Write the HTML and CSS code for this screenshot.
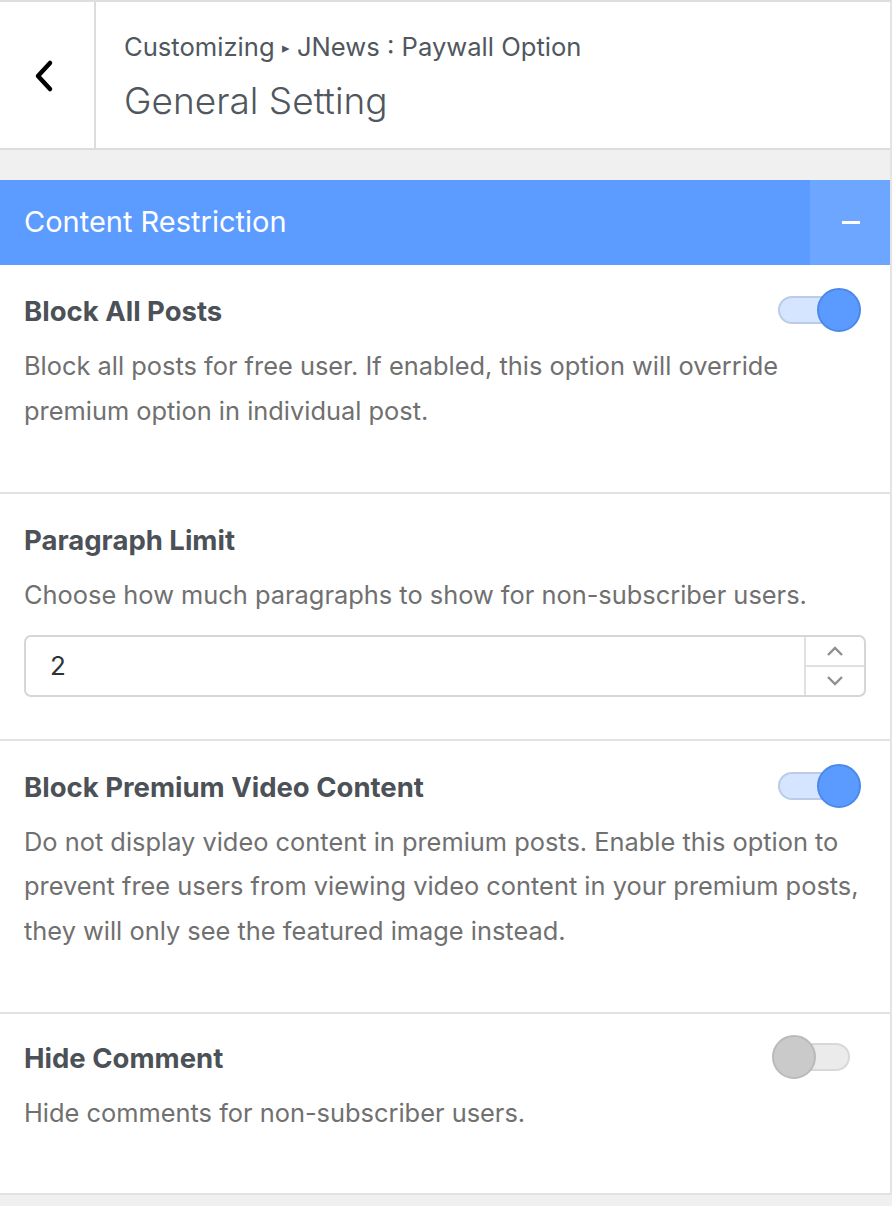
FILE: index.html
```html
<!DOCTYPE html>
<html lang="en">
<head>
<meta charset="utf-8">
<title>Customizing JNews Paywall Option</title>
<link rel="stylesheet" href="styles.css">
</head>
<body>
<div class="panel">
  <header class="head">
    <button class="back" aria-label="Back">
      <svg width="24" height="34" viewBox="0 0 24 34"><polyline points="17,4 5,17 17,30" fill="none" stroke="#000" stroke-width="4.5" stroke-linecap="round" stroke-linejoin="round"/></svg>
    </button>
    <div class="titles">
      <div class="crumb">Customizing <span class="arrow">▸</span> JNews : Paywall Option</div>
      <h1 class="title">General Setting</h1>
    </div>
  </header>
  <div class="gap"></div>
  <div class="section-bar">
    <div class="section-title">Content Restriction</div>
    <div class="collapse"><span class="minus"></span></div>
  </div>
  <div class="controls">
    <div class="control">
      <div class="control-head">
        <div class="label">Block All Posts</div>
        <div class="toggle on"><span class="track"></span><span class="knob"></span></div>
      </div>
      <p class="desc">Block all posts for free user. If enabled, this option will override premium option in individual post.</p>
    </div>
    <div class="control">
      <div class="control-head">
        <div class="label">Paragraph Limit</div>
      </div>
      <p class="desc">Choose how much paragraphs to show for non-subscriber users.</p>
      <div class="number">
        <input class="number-input" type="text" value="2">
        <div class="spin">
          <div class="spin-btn"><svg width="20" height="12" viewBox="0 0 20 12"><polyline points="3,10 10,3 17,10" fill="none" stroke="#8c8f94" stroke-width="2.4"/></svg></div>
          <div class="spin-btn down"><svg width="20" height="12" viewBox="0 0 20 12"><polyline points="3,2 10,9 17,2" fill="none" stroke="#8c8f94" stroke-width="2.4"/></svg></div>
        </div>
      </div>
    </div>
    <div class="control">
      <div class="control-head">
        <div class="label">Block Premium Video Content</div>
        <div class="toggle on"><span class="track"></span><span class="knob"></span></div>
      </div>
      <p class="desc">Do not display video content in premium posts. Enable this option to prevent free users from viewing video content in your premium posts, they will only see the featured image instead.</p>
    </div>
    <div class="control">
      <div class="control-head">
        <div class="label">Hide Comment</div>
        <div class="toggle off"><span class="track"></span><span class="knob"></span></div>
      </div>
      <p class="desc">Hide comments for non-subscriber users.</p>
    </div>
  </div>
</div>
</body>
</html>
```

FILE: styles.css
```css
* { box-sizing: border-box; }
html, body { margin: 0; padding: 0; }
body {
  background: #f0f0f1;
  font-family: Inter, "Noto Sans", "Liberation Sans", sans-serif;
  color: #50575e;
  width: 892px;
  height: 1206px;
  overflow: hidden;
}
.panel {
  width: 892px;
  border-top: 2px solid #dedede;
  border-right: 2px solid #e4e4e4;
}
.head {
  display: flex;
  height: 148px;
  background: #fff;
  border-bottom: 2px solid #dcdcde;
}
.back {
  width: 96px;
  flex: none;
  border: 0;
  border-right: 2px solid #dcdcde;
  background: #fff;
  display: flex;
  align-items: center;
  justify-content: center;
  padding: 0;
  margin: 0;
}
.back svg { margin-right: 4px; margin-top: 2px; }
.titles {
  padding: 29px 0 0 28px;
  display: flex;
  flex-direction: column;
}
.crumb {
  font-size: 25.6px;
  line-height: 32px;
  color: #50575e;
}
.arrow { font-size: 15px; vertical-align: 3px; }
.title {
  margin: 13px 0 0;
  font-size: 37px;
  line-height: 48px;
  font-weight: 300;
  color: #50575e;
}
.gap { height: 30px; }
.section-bar {
  display: flex;
  height: 85px;
  background: #5c9bff;
}
.section-title {
  flex: 1;
  padding-left: 24px;
  display: flex;
  align-items: center;
  font-size: 29px;
  color: #fff;
  padding-bottom: 2px;
}
.collapse {
  width: 80px;
  background: #6ca6ff;
  display: flex;
  align-items: center;
  justify-content: center;
}
.minus {
  width: 18px;
  height: 3px;
  background: #fff;
  margin-left: 1px;
}
.controls { background: #fff; }
.control {
  padding: 28px 24px 42px;
  border-bottom: 2px solid #e2e2e2;
}
.control:last-child { padding-top: 26px; padding-bottom: 40px; }
.control-head {
  display: flex;
  align-items: center;
  justify-content: space-between;
  height: 36px;
}
.label {
  font-size: 27.5px;
  font-weight: 700;
  color: #4b5157;
}
.toggle {
  position: relative;
  width: 88px;
  height: 44px;
  margin-right: 5px;
  margin-top: -2px;
}
.track {
  position: absolute;
  left: 5px;
  top: 8px;
  width: 73px;
  height: 28px;
  border-radius: 14px;
  border: 2px solid #bccbe6;
  background: #d6e5ff;
}
.knob {
  position: absolute;
  top: 0;
  width: 44px;
  height: 44px;
  border-radius: 50%;
  background: #5b9bff;
  border: 2px solid #4c88ea;
}
.toggle.on .knob { left: 44px; }
.toggle.off { margin-right: 6px; }
.toggle.off .track { background: #ebebeb; border-color: #d8d8d8; }
.toggle.off .knob { left: 0; background: #cacaca; border-color: #bababa; }
.desc {
  margin: 15px 0 17px;
  font-size: 25.4px;
  line-height: 44.5px;
  color: #707070;
}
.number {
  display: flex;
  height: 62px;
  margin-top: 3px;
  border: 2px solid #d6d6d6;
  border-radius: 7px;
  background: #fff;
}
.number-input {
  flex: 1;
  border: 0;
  outline: 0;
  background: transparent;
  padding: 0 0 0 24px;
  font-family: inherit;
  font-size: 26px;
  color: #2c3338;
}
.spin {
  width: 60px;
  border-left: 2px solid #e0e0e0;
  display: flex;
  flex-direction: column;
}
.spin-btn {
  flex: 1;
  display: flex;
  align-items: center;
  justify-content: center;
}
.spin-btn.down { border-top: 2px solid #e0e0e0; }
```
